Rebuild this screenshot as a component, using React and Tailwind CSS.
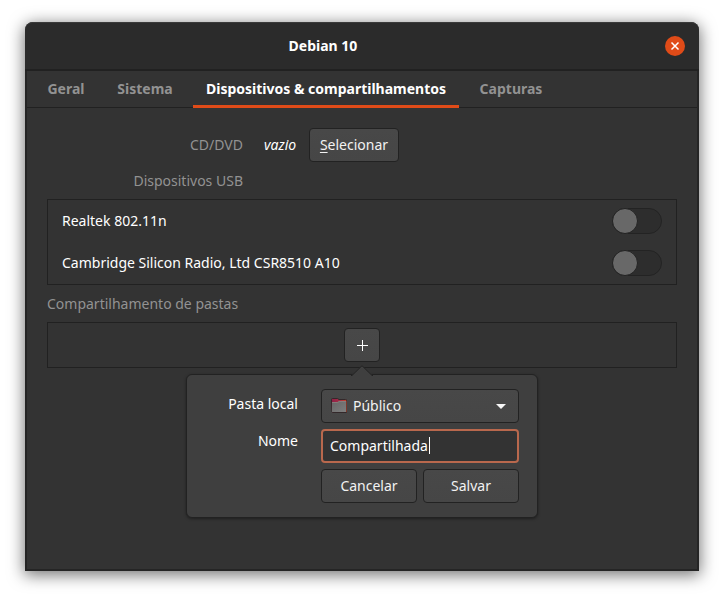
function Tab({ label, active, width }) {
  return (
    <button
      type="button"
      role="tab"
      aria-selected={active}
      className={`-mb-px flex items-center justify-center whitespace-nowrap border-b-3 pt-px text-sm font-bold ${width} ${
        active ? "border-[#e04b18] text-white" : "border-transparent text-[#929292]"
      }`}
    >
      {label}
    </button>
  );
}

const buttonStyle =
  "h-[34px] rounded border border-[#222222] bg-linear-to-b from-[#484848] to-[#464646] text-sm text-[#f2f2f2]";

function UsbDevice({ id, name }) {
  return (
    <li className="flex h-[42px] items-center justify-between px-3.5">
      <label htmlFor={id} className="text-white">
        {name}
      </label>
      <input
        id={id}
        type="checkbox"
        role="switch"
        className="flex h-[26px] w-[50px] appearance-none rounded-full border border-[#232323] bg-[#2d2d2d] before:-m-px before:size-[26px] before:rounded-full before:border before:border-[#232323] before:bg-[#686868] before:content-['']"
      />
    </li>
  );
}

function FolderIcon() {
  return (
    <svg
      className="pointer-events-none absolute left-2.5 top-[9px]"
      width="16"
      height="16"
      viewBox="0 0 16 16"
      aria-hidden="true"
    >
      <defs>
        <linearGradient id="tab" x1="0" x2="1">
          <stop offset="0" stopColor="#8f2148" />
          <stop offset="0.45" stopColor="#a02a45" />
          <stop offset="1" stopColor="#c9482a" />
        </linearGradient>
        <linearGradient id="front" x1="0" y1="0" x2="1" y2="1">
          <stop offset="0" stopColor="#666666" />
          <stop offset="1" stopColor="#7e7e7e" />
        </linearGradient>
      </defs>
      <path
        d="M0.5 1.5a1 1 0 0 1 1-1h5l1.500 1h6.500a1.500 1.500 0 0 1 1.500 1.500v10.500a1 1 0 0 1-1 1h-13a1 1 0 0 1-1-1z"
        fill="url(#tab)"
        stroke="#33282a"
      />
      <path d="M1 4h5.500L8 3h7v10.500a0.500 0.500 0 0 1-0.500 0.500h-13a0.500 0.500 0 0 1-0.500-0.500z" fill="url(#front)" />
      <path d="M1 4.500h5.700L8.200 3.500H15" fill="none" stroke="#8c8280" strokeWidth="0.800" />
    </svg>
  );
}

function SharePopover() {
  return (
    <form
      className="absolute left-1/2 top-full z-10 mt-3 w-[352px] -translate-x-1/2 rounded-md border border-[#222222] bg-[#3f3f3f] py-3.5 pl-6 pr-[18px] shadow-[0_1px_3px_rgba(0,0,0,0.4)]"
      onSubmit={(event) => event.preventDefault()}
    >
      <svg
        className="absolute bottom-full left-1/2 -mb-px -translate-x-1/2"
        width="22"
        height="11"
        viewBox="0 0 22 11"
        aria-hidden="true"
      >
        <path d="M0 11L11 0.500L22 11z" fill="#3f3f3f" />
        <path d="M0 10.500h1L11 0.700L21 10.500h1" fill="none" stroke="#222222" />
      </svg>
      <div className="grid grid-cols-[1fr_198px] gap-x-[23px] gap-y-1.5">
        <label htmlFor="folder" className="pt-[5px] text-right text-white">
          Pasta local
        </label>
        <div className="relative">
          <select id="folder" className={`${buttonStyle} w-full appearance-none pl-[31px]`}>
            <option>Público</option>
          </select>
          <FolderIcon />
          <svg
            className="pointer-events-none absolute right-3 top-[15px]"
            width="12"
            height="6"
            viewBox="0 0 12 6"
            aria-hidden="true"
          >
            <path d="M1 0h10L6 5z" fill="#f7f7f7" />
          </svg>
        </div>
        <label htmlFor="name" className="pt-0.5 text-right text-white">
          Nome
        </label>
        <div className="relative">
          <input
            id="name"
            type="text"
            defaultValue="Compartilhada"
            className="h-[34px] w-full rounded border-2 border-[#b9684d] bg-[#333333] px-[7px] pb-0.5 text-sm text-white caret-transparent outline-none"
          />
          <span className="absolute left-[108px] top-2 h-[17px] w-px bg-white" />
        </div>
        <div className="col-start-2 grid grid-cols-2 gap-1.5">
          <button type="button" className={buttonStyle}>
            Cancelar
          </button>
          <button type="submit" className={buttonStyle}>
            Salvar
          </button>
        </div>
      </div>
    </form>
  );
}

export default function App() {
  return (
    <div className="flex min-h-screen flex-col bg-white px-[25px] pb-7 pt-[22px] font-['Noto_Sans',sans-serif] text-sm">
      <div className="flex flex-1 flex-col rounded-t-lg bg-[#333333] shadow-[0_3px_16px_1px_rgba(0,0,0,0.55)]">
        <header className="flex h-[49px] items-center rounded-t-lg border-b-2 border-t border-b-[#212121] border-t-[#3a3a3a] bg-[#2b2b2b] pl-0.5 pr-3.5">
          <h1 className="flex-1 text-center text-sm font-bold text-white">Debian 10</h1>
          <div className="flex w-[66px] justify-end">
            <button
              type="button"
              aria-label="Fechar"
              className="flex size-5 items-center justify-center rounded-full bg-[#e04b18]"
            >
              <svg width="10" height="10" viewBox="0 0 10 10" aria-hidden="true">
                <path d="M1.500 1.500l7 7M8.500 1.500l-7 7" stroke="#ffffff" strokeWidth="1.500" />
              </svg>
            </button>
          </div>
        </header>
        <div className="flex flex-1 flex-col border-x-2 border-b-2 border-[#252525]">
          <div role="tablist" className="flex h-[37px] gap-2 border-b border-[#212121] px-2">
            <Tab label="Geral" width="w-[62px]" />
            <Tab label="Sistema" width="w-[80px]" />
            <Tab label="Dispositivos & compartilhamentos" width="w-[266px]" active />
            <Tab label="Capturas" width="w-[88px]" />
          </div>
          <main className="px-5 pt-5">
            <div className="flex items-center">
              <span className="w-[196px] text-right text-[#929292]">CD/DVD</span>
              <em className="w-[66px] pl-[21px] text-white">vazio</em>
              <button type="button" className={`${buttonStyle} w-[90px]`}>
                <span className="underline underline-offset-2">S</span>elecionar
              </button>
            </div>
            <h2 className="flex h-[37px] w-[196px] items-center justify-end text-[#929292]">Dispositivos USB</h2>
            <ul className="border border-[#212121]">
              <UsbDevice id="usb-realtek" name="Realtek 802.11n" />
              <UsbDevice id="usb-csr" name="Cambridge Silicon Radio, Ltd CSR8510 A10" />
            </ul>
            <h2 className="flex h-[37px] items-center text-[#929292]">Compartilhamento de pastas</h2>
            <div className="flex h-[46px] items-center justify-center border border-[#212121]">
              <div className="relative flex">
                <button
                  type="button"
                  aria-label="Adicionar pasta"
                  className={`${buttonStyle} flex w-9 items-center justify-center`}
                >
                  <svg width="12" height="12" viewBox="0 0 12 12" aria-hidden="true">
                    <path d="M6.500 1v11M1 6.500h11" stroke="#ffffff" />
                  </svg>
                </button>
                <SharePopover />
              </div>
            </div>
          </main>
        </div>
      </div>
    </div>
  );
}
